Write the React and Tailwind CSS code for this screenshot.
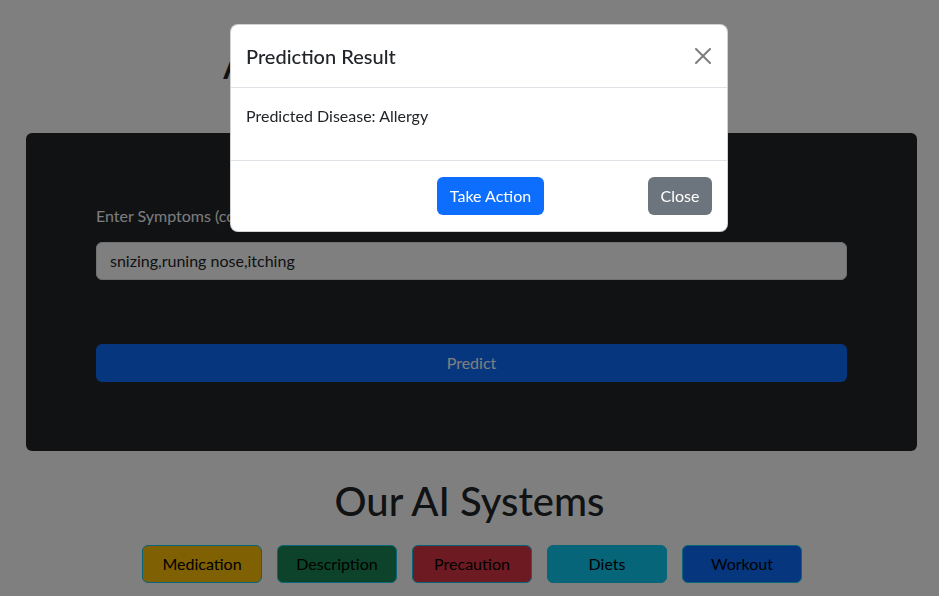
export default function App() {
  const systems = [
    { name: "Medication", cls: "bg-[#ffc107]" },
    { name: "Description", cls: "bg-[#198754]" },
    { name: "Precaution", cls: "bg-[#dc3545]" },
    { name: "Diets", cls: "bg-[#0dcaf0]" },
    { name: "Workout", cls: "bg-[#0d6efd]" },
  ];
  return (
    <div className="relative min-h-[596px] bg-white font-['Lato','Noto_Sans',sans-serif] text-[#212529]">
      <div className="pt-10">
        <h1 className="text-center text-[40px] font-medium leading-[48px] tracking-[-1.4px]">AI Medicine Recommendation</h1>
        <div className="ml-[26px] mr-[22px] mt-[45px] rounded-md bg-[#212529] px-[70px] pt-[71px] pb-[69px]">
          <label className="mb-[14px] block text-[16px] leading-6 text-[#f8f9fa]">
            Enter Symptoms (comma separated):
          </label>
          <div className="flex h-[38px] items-center rounded-md border border-[#dee2e6] bg-white px-[13px] text-[16px] text-[#212529]">
            snizing,runing nose,itching
          </div>
          <button className="mt-16 flex h-[38px] w-full items-center justify-center rounded-md bg-[#0d6efd] text-[16px] text-white">
            Predict
          </button>
        </div>
        <h1 className="mt-[26px] text-center text-[40px] font-medium leading-[48px]">Our AI Systems</h1>
        <div className="mt-5 flex justify-center gap-[15px] pl-[5px]">
          {systems.map((s) => (
            <button
              key={s.name}
              className={`flex h-[38px] w-[120px] items-center justify-center rounded-md border border-[#0dcaf0] text-[16px] text-black ${s.cls}`}
            >
              {s.name}
            </button>
          ))}
        </div>
      </div>

      <div className="fixed inset-0 bg-black/50" />

      <div className="fixed left-[230px] top-[24px] w-[498px] rounded-lg border border-black/[0.175] bg-white">
        <div className="flex items-center justify-between border-b border-[#dee2e6] py-4 pl-[15px] pr-4">
          <h5 className="text-[20px] font-medium leading-[30px]">Prediction Result</h5>
          <svg width="16" height="16" viewBox="0 0 16 16" className="opacity-50">
            <path
              d="M.293.293a1 1 0 0 1 1.414 0L8 6.586 14.293.293a1 1 0 1 1 1.414 1.414L9.414 8l6.293 6.293a1 1 0 0 1-1.414 1.414L8 9.414l-6.293 6.293a1 1 0 0 1-1.414-1.414L6.586 8 .293 1.707a1 1 0 0 1 0-1.414z"
              fill="#000"
            />
          </svg>
        </div>
        <div className="py-4 pl-[15px] pr-4">
          <p className="mb-4 text-[16px] leading-6">Predicted Disease: Allergy</p>
        </div>
        <div className="flex items-center justify-end border-t border-[#dee2e6] py-[16px] pl-[16px] pr-[15px]">
          <button className="mr-[104px] flex h-[38px] w-[107px] items-center justify-center rounded-md bg-[#0d6efd] text-[16px] text-white">
            Take Action
          </button>
          <button className="flex h-[38px] w-[64px] items-center justify-center rounded-md bg-[#6c757d] text-[16px] text-white">
            Close
          </button>
        </div>
      </div>
    </div>
  );
}
